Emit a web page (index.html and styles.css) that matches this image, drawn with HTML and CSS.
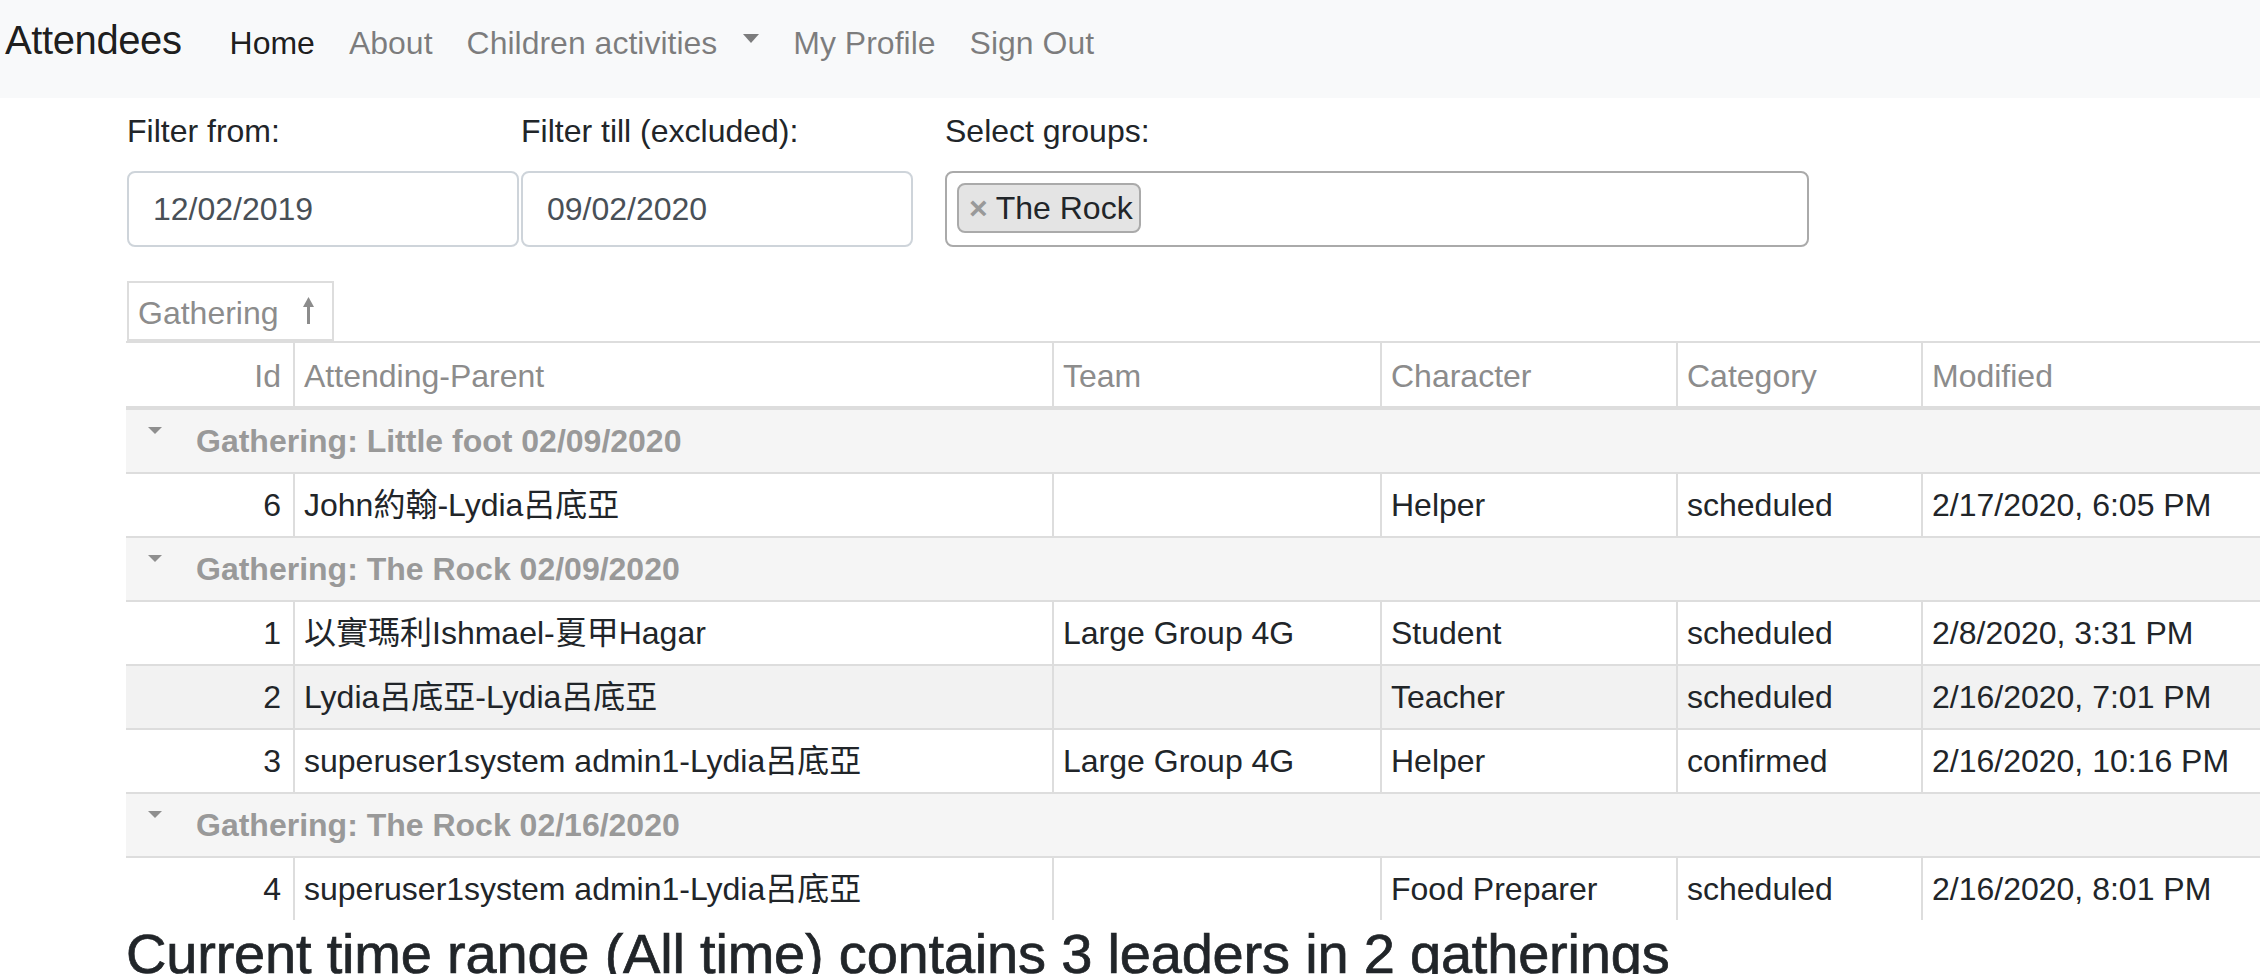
FILE: index.html
```html
<!DOCTYPE html>
<html lang="en">
<head>
<meta charset="utf-8">
<title>Attendees</title>
<link rel="stylesheet" href="styles.css">
</head>
<body>
<nav class="navbar">
  <span class="brand">Attendees</span>
  <a class="nav-link active">Home</a>
  <a class="nav-link">About</a>
  <a class="nav-link">Children activities<span class="caret"></span></a>
  <a class="nav-link">My Profile</a>
  <a class="nav-link">Sign Out</a>
</nav>

<section class="filters">
  <div class="field field-from">
    <label>Filter from:</label>
    <div class="form-control">12/02/2019</div>
  </div>
  <div class="field field-till">
    <label>Filter till (excluded):</label>
    <div class="form-control">09/02/2020</div>
  </div>
  <div class="field field-groups">
    <label>Select groups:</label>
    <div class="select-box">
      <span class="chip"><span class="chip-x">×</span>The Rock</span>
    </div>
  </div>
</section>

<div class="groupby-row">
  <div class="groupby">Gathering<svg class="sort-arrow" width="11" height="27" viewBox="0 0 11 27"><polygon points="5.5,0 11,10 0,10" fill="#8c8c8c"/><rect x="4" y="9" width="3" height="18" fill="#8c8c8c"/></svg></div>
</div>

<div class="grid">
  <div class="thead">
    <div class="th num">Id</div>
    <div class="th">Attending-Parent</div>
    <div class="th">Team</div>
    <div class="th">Character</div>
    <div class="th">Category</div>
    <div class="th">Modified</div>
  </div>

  <div class="group"><span class="group-caret"></span>Gathering: Little foot 02/09/2020</div>
  <div class="row">
    <div class="td num">6</div>
    <div class="td">John約翰-Lydia呂底亞</div>
    <div class="td"></div>
    <div class="td">Helper</div>
    <div class="td">scheduled</div>
    <div class="td">2/17/2020, 6:05 PM</div>
  </div>

  <div class="group"><span class="group-caret"></span>Gathering: The Rock 02/09/2020</div>
  <div class="row">
    <div class="td num">1</div>
    <div class="td">以實瑪利Ishmael-夏甲Hagar</div>
    <div class="td">Large Group 4G</div>
    <div class="td">Student</div>
    <div class="td">scheduled</div>
    <div class="td">2/8/2020, 3:31 PM</div>
  </div>
  <div class="row striped">
    <div class="td num">2</div>
    <div class="td">Lydia呂底亞-Lydia呂底亞</div>
    <div class="td"></div>
    <div class="td">Teacher</div>
    <div class="td">scheduled</div>
    <div class="td">2/16/2020, 7:01 PM</div>
  </div>
  <div class="row">
    <div class="td num">3</div>
    <div class="td">superuser1system admin1-Lydia呂底亞</div>
    <div class="td">Large Group 4G</div>
    <div class="td">Helper</div>
    <div class="td">confirmed</div>
    <div class="td">2/16/2020, 10:16 PM</div>
  </div>

  <div class="group"><span class="group-caret"></span>Gathering: The Rock 02/16/2020</div>
  <div class="row last">
    <div class="td num">4</div>
    <div class="td">superuser1system admin1-Lydia呂底亞</div>
    <div class="td"></div>
    <div class="td">Food Preparer</div>
    <div class="td">scheduled</div>
    <div class="td">2/16/2020, 8:01 PM</div>
  </div>
</div>

<h3 class="summary">Current time range (All time) contains 3 leaders in 2 gatherings</h3>
</body>
</html>
```

FILE: styles.css
```css
html, body {
  margin: 0;
  padding: 0;
  overflow: hidden;
}

body {
  width: 2260px;
  font-family: "Liberation Sans", Arial, "Noto Sans CJK TC", sans-serif;
  font-size: 32px;
  line-height: 48px;
  color: #212529;
  background: #fff;
}

/* navbar */
.navbar {
  height: 98px;
  box-sizing: border-box;
  background: #f8f9fa;
  display: flex;
  align-items: baseline;
  padding: 10px 0 0 5px;
}

.brand {
  font-size: 40px;
  line-height: 60px;
  letter-spacing: -0.4px;
  color: rgba(0, 0, 0, 0.9);
  margin-right: 31px;
}

.nav-link {
  padding: 0 17px;
  line-height: 48px;
  color: rgba(0, 0, 0, 0.5);
  white-space: nowrap;
}

.nav-link.active {
  color: rgba(0, 0, 0, 0.9);
}

.caret {
  display: inline-block;
  width: 0;
  height: 0;
  border-top: 9px solid currentColor;
  border-left: 8px solid transparent;
  border-right: 8px solid transparent;
  margin-left: 26px;
  vertical-align: 11px;
}

/* filters */
.filters {
  display: flex;
  padding-left: 127px;
  margin-top: 9px;
}

.field label {
  display: block;
  line-height: 48px;
  margin-bottom: 16px;
  white-space: nowrap;
}

.field-from {
  width: 394px;
}

.field-till {
  width: 392px;
}

.field-groups {
  width: 864px;
  margin-left: 32px;
}

.form-control {
  box-sizing: border-box;
  width: 392px;
  height: 76px;
  border: 2px solid #ced4da;
  border-radius: 8px;
  padding: 12px 24px;
  line-height: 48px;
  color: #495057;
}

.select-box {
  box-sizing: border-box;
  height: 76px;
  border: 2px solid #aaa;
  border-radius: 8px;
  padding: 10px;
  display: flex;
  align-items: flex-start;
}

.chip {
  display: inline-flex;
  align-items: baseline;
  border: 2px solid #aaa;
  background: #e4e4e4;
  border-radius: 8px;
  padding: 0 6px 0 10px;
  line-height: 46px;
  color: #212529;
}

.chip-x {
  color: #999;
  font-weight: bold;
  margin-right: 8px;
}

/* group-by */
.groupby-row {
  display: flex;
  padding-left: 127px;
  margin-top: 34px;
}

.groupby {
  border: 2px solid #ddd;
  padding: 6px 18px 2px 9px;
  line-height: 48px;
  color: #8c8c8c;
  white-space: nowrap;
}

.sort-arrow {
  margin-left: 24px;
  vertical-align: baseline;
}

/* table grid */
.grid {
  margin-left: 126px;
  width: 2195px;
  border-top: 2px solid #ddd;
}

.thead,
.row {
  display: grid;
  grid-template-columns: 167px 759px 328px 296px 245px 400px;
}

.thead {
  border-bottom: 4px solid #ddd;
  color: #8c8c8c;
}

.th {
  padding: 9px 9px 6px;
  line-height: 48px;
  white-space: nowrap;
}

.th + .th,
.td + .td {
  border-left: 2px solid #ddd;
}

.num {
  text-align: right;
  padding-right: 12px;
}

.row {
  border-bottom: 2px solid #ddd;
}

.row.last {
  border-bottom: none;
}

.row.striped {
  background: #f2f2f2;
}

.td {
  padding: 7px 9px;
  line-height: 48px;
  white-space: nowrap;
}

.td.num {
  padding-right: 12px;
}

.group {
  background: #f5f5f5;
  border-bottom: 2px solid #ddd;
  padding: 7px 0 7px 22px;
  line-height: 48px;
  font-weight: bold;
  color: #999;
  white-space: nowrap;
}

.group-caret {
  display: inline-block;
  width: 0;
  height: 0;
  border-top: 7px solid #8f8f8f;
  border-left: 7px solid transparent;
  border-right: 7px solid transparent;
  vertical-align: 18px;
  margin-right: 34px;
}

/* summary heading */
.summary {
  margin: 0;
  padding-left: 126px;
  font-size: 56px;
  line-height: 67px;
  font-weight: 500;
  letter-spacing: -0.2px;
  -webkit-text-stroke: 0.7px #212529;
  white-space: nowrap;
}
```
